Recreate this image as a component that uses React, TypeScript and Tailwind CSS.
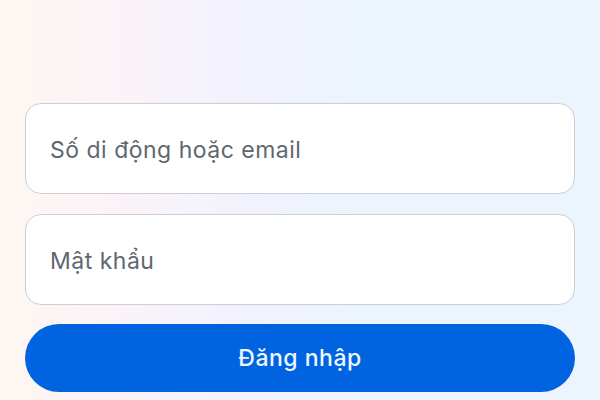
export default function App() {
  return (
    <div
      className="w-[600px] h-[400px] overflow-hidden bg-[linear-gradient(90deg,#fdf7f1_0%,#fcf3f7_18%,#f2f2fd_40%,#ecf4fe_60%,#ecf5fe_100%)] flex flex-col px-[25px] pt-[103px]"
      style={{ fontFamily: '"Inter", "Roboto", "Noto Sans", sans-serif' }}
    >
      <div className="h-[91px] rounded-[16px] border border-[#cbd0d6] bg-white flex items-center pl-[24px] pt-[3px] text-[23px] tracking-[0.5px] text-[#606770]">
        Số di động hoặc email
      </div>
      <div className="mt-[20px] h-[91px] rounded-[16px] border border-[#cbd0d6] bg-white flex items-center pl-[24px] pt-[3px] text-[23px] tracking-[0.5px] text-[#606770]">
        Mật khẩu
      </div>
      <div className="mt-[19px] h-[68px] rounded-full bg-[#0064e0] flex items-center justify-center text-[23px] tracking-[0.5px] font-medium text-[#f0f6ff]">
        Đăng nhập
      </div>
    </div>
  );
}
